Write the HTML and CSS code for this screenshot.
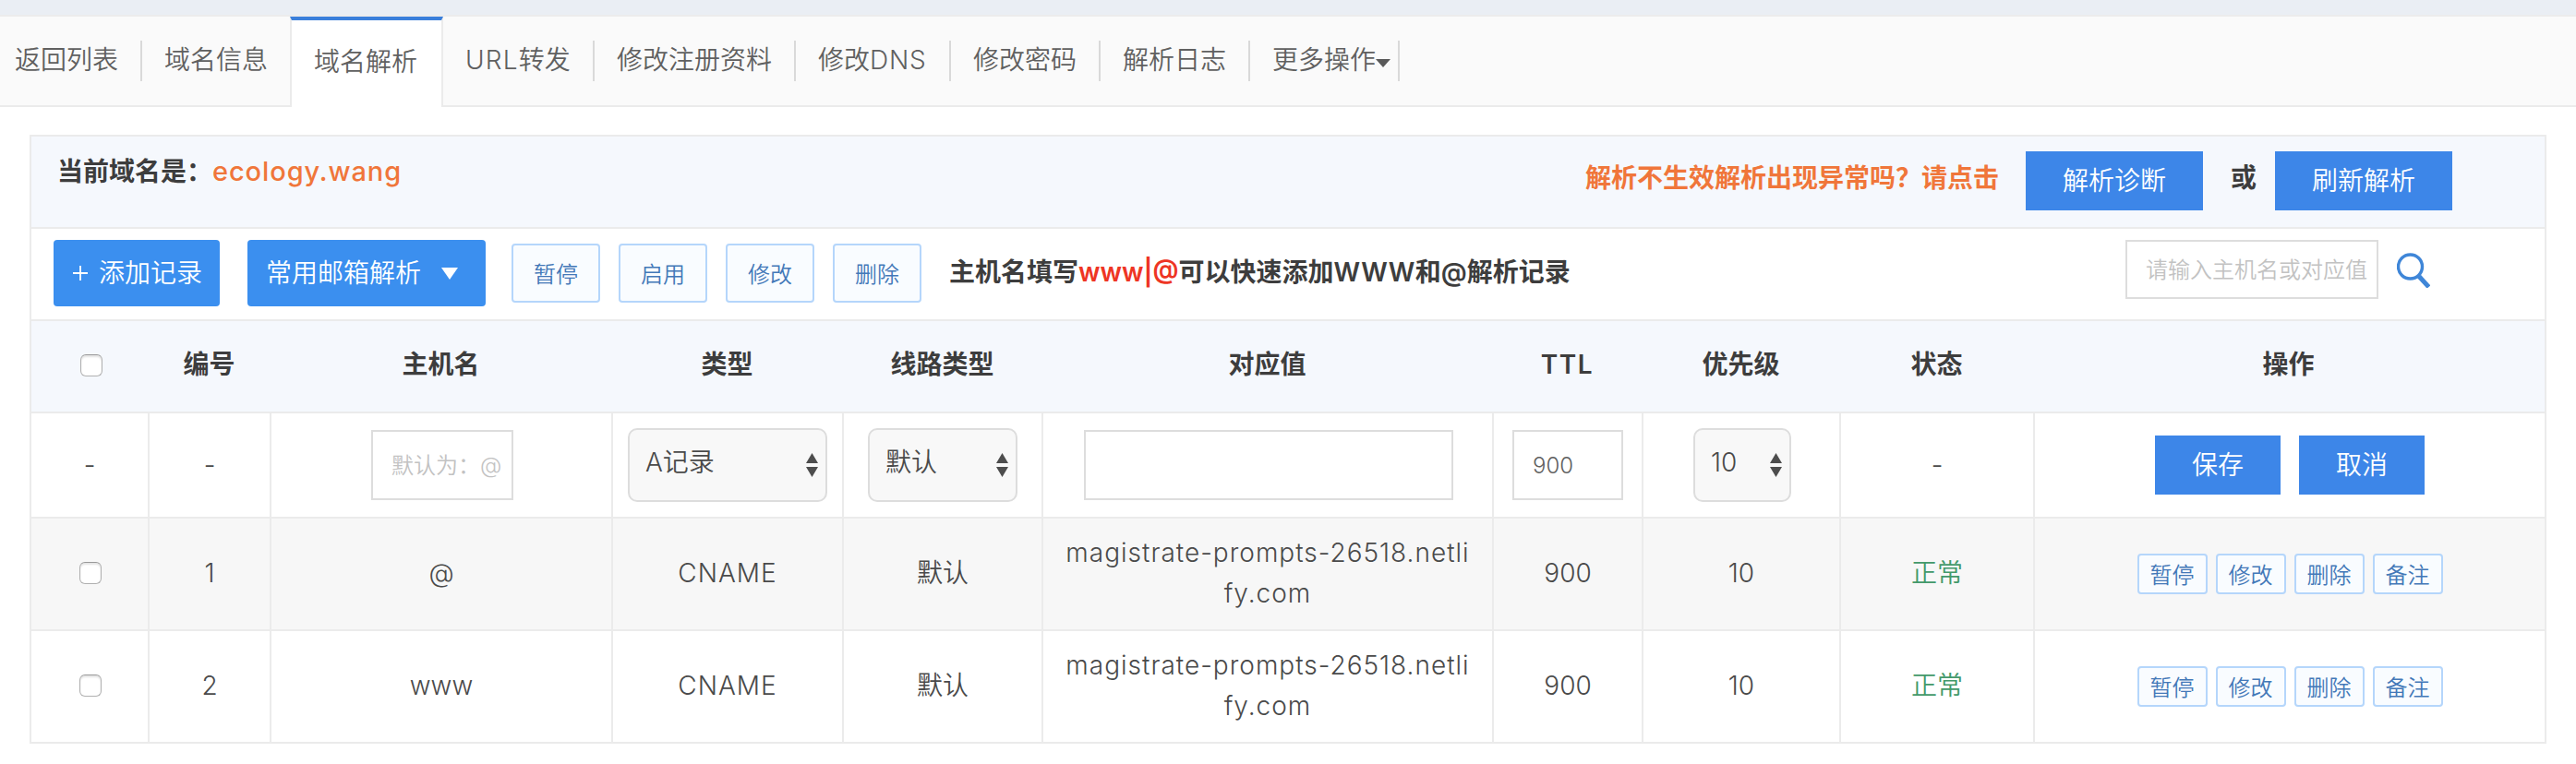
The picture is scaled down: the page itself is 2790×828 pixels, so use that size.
FILE: index.html
```html
<!DOCTYPE html>
<html lang="zh-CN">
<head>
<meta charset="utf-8">
<title>域名解析</title>
<link rel="stylesheet" href="styles.css">
</head>
<body>
<div class="topbar"></div>
<nav class="tabs">
  <a class="tab tab-first">返回列表</a>
  <a class="tab tab-info">域名信息</a>
  <a class="tab tab-active">域名解析</a>
  <a class="tab tab-url"><span class="lat-url">URL</span>转发</a>
  <a class="tab">修改注册资料</a>
  <a class="tab tab-dns">修改<span class="lat-dns">DNS</span></a>
  <a class="tab">修改密码</a>
  <a class="tab">解析日志</a>
  <a class="tab tab-more">更多操作<i class="caret"></i></a>
</nav>
<main class="panel">
  <header class="domain-bar">
    <div class="current">当前域名是：<span class="domain">ecology.wang</span></div>
    <div class="diagnose">
      <span class="warn">解析不生效解析出现异常吗？请点击</span>
      <button class="btn btn-wide">解析诊断</button>
      <b class="or">或</b>
      <button class="btn btn-wide">刷新解析</button>
    </div>
  </header>
  <div class="toolbar">
    <button class="main-btn add"><svg class="plus" viewBox="0 0 16 16"><path d="M8 0V16M0 8H16"/></svg>添加记录</button>
    <button class="main-btn mail">常用邮箱解析<i class="down"></i></button>
    <div class="batch">
      <button class="ghost">暂停</button>
      <button class="ghost">启用</button>
      <button class="ghost">修改</button>
      <button class="ghost">删除</button>
    </div>
    <p class="tip">主机名填写<span class="red">www|@</span>可以快速添加<span class="lat-www">WWW</span>和@解析记录</p>
    <div class="search">
      <input class="field search-input" placeholder="请输入主机名或对应值">
      <svg class="search-icon" viewBox="0 0 36 38"><circle cx="14.5" cy="15" r="13" fill="none" stroke="#3f86d8" stroke-width="3.4"/><path d="M24 25.5L34.5 37" stroke="#3f86d8" stroke-width="5" fill="none"/></svg>
    </div>
  </div>
  <table class="records">
    <colgroup><col class="c1"><col class="c2"><col class="c3"><col class="c4"><col class="c5"><col class="c6"><col class="c7"><col class="c8"><col class="c9"><col class="c10"></colgroup>
    <thead>
      <tr><th class="pick"><input type="checkbox" class="check"></th><th>编号</th><th>主机名</th><th>类型</th><th>线路类型</th><th>对应值</th><th class="th-ttl">TTL</th><th>优先级</th><th>状态</th><th>操作</th></tr>
    </thead>
    <tbody>
      <tr class="edit">
        <td>-</td><td>-</td>
        <td class="inset"><input class="field host" placeholder="默认为：@"></td>
        <td><div class="select sel-type"><span>A记录</span><svg class="arrows" viewBox="0 0 13 26"><path d="M6.5 0L13 11H0ZM0 15H13L6.5 26Z"/></svg></div></td>
        <td><div class="select sel-line"><span>默认</span><svg class="arrows" viewBox="0 0 13 26"><path d="M6.5 0L13 11H0ZM0 15H13L6.5 26Z"/></svg></div></td>
        <td class="inset"><input class="field value"></td>
        <td><input class="field ttl" value="900"></td>
        <td class="inset"><div class="select sel-prio"><span>10</span><svg class="arrows" viewBox="0 0 13 26"><path d="M6.5 0L13 11H0ZM0 15H13L6.5 26Z"/></svg></div></td>
        <td>-</td>
        <td><div class="actions save"><button class="btn">保存</button><button class="btn">取消</button></div></td>
      </tr>
      <tr class="record odd">
        <td class="pick"><input type="checkbox" class="check"></td><td>1</td><td>@</td><td class="type">CNAME</td><td>默认</td>
        <td class="target">magistrate-prompts-26518.netli<br>fy.com</td><td>900</td><td>10</td><td class="ok">正常</td>
        <td><div class="actions"><button class="mini">暂停</button><button class="mini">修改</button><button class="mini">删除</button><button class="mini">备注</button></div></td>
      </tr>
      <tr class="record">
        <td class="pick"><input type="checkbox" class="check"></td><td>2</td><td>www</td><td class="type">CNAME</td><td>默认</td>
        <td class="target">magistrate-prompts-26518.netli<br>fy.com</td><td>900</td><td>10</td><td class="ok">正常</td>
        <td><div class="actions"><button class="mini">暂停</button><button class="mini">修改</button><button class="mini">删除</button><button class="mini">备注</button></div></td>
      </tr>
    </tbody>
  </table>
</main>
</body>
</html>
```
FILE: styles.css
```css
* { box-sizing: border-box; }
body {
  margin: 0;
  background: #fff;
  color: #4a4a4a;
  font: 350 28px/44px Inter, "Noto Sans CJK SC", sans-serif;
}
button, input { font-family: inherit; font-weight: inherit; margin: 0; }
button { padding: 0; border: 0; }

.topbar { height: 18px; background: #eaeef4; border-bottom: 2px solid #ececec; }

.tabs {
  display: flex;
  height: 98px;
  background: #fafafa;
  border-bottom: 2px solid #ebebeb;
  color: #606060;
  white-space: nowrap;
}
.tab {
  flex: none;
  height: 44px;
  margin-top: 26px;
  padding: 0 24px;
  line-height: 42px;
  border-right: 2px solid #d9d9d9;
}
.tab-first { padding-left: 16px; }
.tab-info { border-right: 0; }
.tab-active {
  width: 166px;
  height: 98px;
  margin-top: 0;
  padding: 24px 0 0 24px;
  background: #fff;
  border: solid #ebebeb;
  border-width: 4px 2px 0;
  border-top-color: #3a7fdb;
}
.tab-url { width: 164px; }
.lat-url { letter-spacing: 1.2px; }
.lat-dns { letter-spacing: .8px; }
.tab-dns { width: 168px; }
.tab-more { padding-right: 8px; }
.caret {
  display: inline-block;
  vertical-align: 2px;
  border: 8px solid transparent;
  border-top: 9px solid #595959;
  border-bottom: 0;
}

.panel { width: 2726px; margin: 30px 0 0 32px; border: solid #ebebeb; border-width: 2px 2px 0; }
.domain-bar {
  display: flex;
  justify-content: space-between;
  height: 100px;
  padding: 16px 100px 0 28px;
  background: #f5f8fd;
  border-bottom: 2px solid #ebebeb;
  color: #3d3d3d;
  font-weight: 600;
}
.domain { color: #f0763a; font-size: 29px; font-weight: 500; letter-spacing: .9px; }
.diagnose { display: flex; }
.warn { color: #f0763a; margin: 7px 29px 0 0; }
.or { font-weight: 600; margin: 7px 20px 0 30px; }
.btn {
  width: 136px;
  height: 64px;
  padding-bottom: 4px;
  background: #3d86e8;
  color: #fff;
  font-size: 28px;
  font-weight: 350;
}
.btn-wide { width: 192px; }

.toolbar {
  display: flex;
  align-items: flex-start;
  height: 100px;
  padding: 12px 124px 0 24px;
  border-bottom: 2px solid #ebebeb;
}
.main-btn {
  display: flex;
  align-items: center;
  height: 72px;
  padding: 0 0 4px 20px;
  border-radius: 4px;
  background: #3b8fef;
  color: #fff;
  font-size: 28px;
}
.add { width: 180px; }
.plus { width: 16px; height: 16px; margin: 4px 12px 0 1px; stroke: #fff; stroke-width: 1.8; }
.mail { width: 258px; margin-left: 30px; }
.down { margin: 4px 0 0 22px; border: 9px solid transparent; border-top: 13px solid #fff; border-bottom: 0; }
.batch { display: flex; gap: 20px; margin: 4px 0 0 28px; }
.ghost, .mini {
  padding-bottom: 2px;
  border: 2px solid #b5d6fb;
  border-radius: 4px;
  background: #f9fcff;
  color: #4378b8;
  font-size: 24px;
}
.ghost { width: 96px; height: 64px; }
.tip { margin: 13px 0 0 30px; color: #3d3d3d; font-weight: 600; white-space: nowrap; }
.red { color: #ee3524; }
.lat-www { letter-spacing: .4px; }
.search { display: flex; margin-left: auto; }
.search-icon { width: 36px; height: 38px; margin: 14px 0 0 20px; }

.field {
  display: block;
  height: 76px;
  padding: 0 0 0 20px;
  border: 2px solid #ddd;
  background: #fff;
  color: #606060;
  font-size: 24px;
}
.field::placeholder { color: #c2c2c2; }
.search-input { width: 274px; height: 64px; }
.host { width: 154px; margin: 0 auto; }
.value { width: 400px; margin: 0 auto; }
.ttl { width: 120px; margin: 0 auto; }

.records { width: 2722px; table-layout: fixed; border-collapse: separate; border-spacing: 0; }
.c1 { width: 128px; }
.c2 { width: 132px; }
.c3 { width: 370px; }
.c4 { width: 250px; }
.c5 { width: 216px; }
.c6 { width: 488px; }
.c7 { width: 162px; }
.c8 { width: 214px; }
.c9 { width: 210px; }
.c10 { width: 552px; }
.records th, .records td {
  padding: 0;
  text-align: center;
  border: solid #ebebeb;
  border-width: 0 2px 2px 0;
}
.records tr > :last-child { border-right: 0; }
.records th {
  height: 100px;
  padding: 0 3px 4px 0;
  background: #f5f8fd;
  border-right: 0;
  color: #3d3d3d;
  font-weight: 600;
}
.records .th-ttl { letter-spacing: 1.6px; }
.edit td { height: 114px; }
.record td { height: 122px; padding-bottom: 2px; }
.records .pick { padding: 0 0 2px 2px; }
.records .inset { padding-left: 2px; }
.odd td { background: #f7f7f7; }
.check {
  appearance: none;
  display: block;
  width: 24px;
  height: 24px;
  margin: 0 auto;
  border: 1px solid #b0b0b0;
  border-top-color: #999;
  border-radius: 6px;
  background: #fff;
  box-shadow: inset 0 2px 2px #e4e4e4;
}
.select {
  display: flex;
  align-items: center;
  justify-content: space-between;
  height: 80px;
  margin: 0 auto;
  padding: 0 8px 0 17px;
  border: 2px solid #ddd;
  border-radius: 10px;
  background: #f8f8f8;
}
.select span { margin-bottom: 6px; }
.arrows { width: 13px; height: 26px; fill: #4d4d4d; }
.sel-type { width: 216px; }
.sel-line { width: 162px; }
.sel-prio { width: 106px; }
.type { letter-spacing: 1px; }
.target { letter-spacing: 1px; }
.actions { display: flex; justify-content: center; gap: 9px; }
.save { gap: 20px; }
.mini { width: 76px; height: 44px; }
.record .actions { padding-top: 2px; }
.records .ok { color: #43996a; }
```
